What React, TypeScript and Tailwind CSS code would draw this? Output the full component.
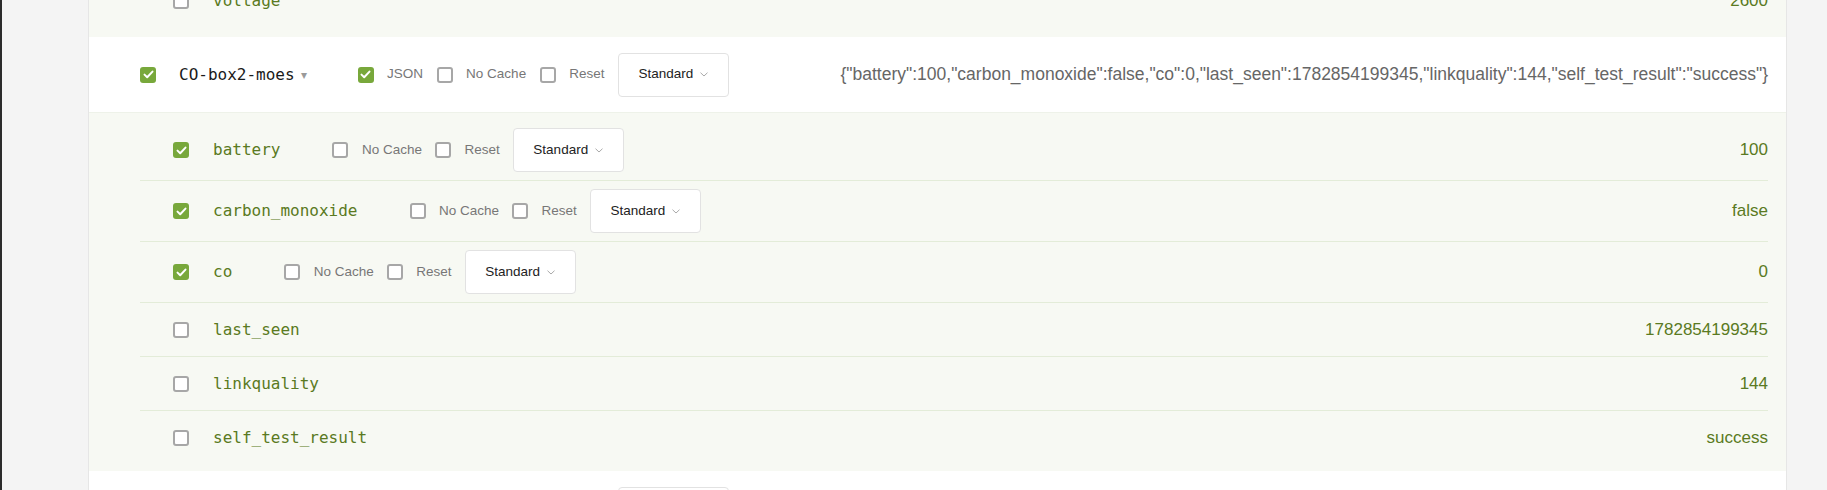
/**
 * Device state panel
 * A device row with its JSON payload and the nested property rows below it
 */

type Prop = {
  name: string
  value: string
  checked: boolean
}

const props: Prop[] = [
  { name: 'battery', value: '100', checked: true },
  { name: 'carbon_monoxide', value: 'false', checked: true },
  { name: 'co', value: '0', checked: true },
  { name: 'last_seen', value: '1782854199345', checked: false },
  { name: 'linkquality', value: '144', checked: false },
  { name: 'self_test_result', value: 'success', checked: false },
]

const payload =
  '{"battery":100,"carbon_monoxide":false,"co":0,"last_seen":1782854199345,"linkquality":144,"self_test_result":"success"}'

function Check({ on }: { on: boolean }) {
  if (on) {
    return (
      <span className="w-4 h-4 shrink-0 rounded-[3px] bg-[#78a83b] flex items-center justify-center">
        <svg width="11" height="9" viewBox="0 0 11 9" fill="none">
          <path d="M1.5 4.6L4.2 7.2L9.5 1.6" stroke="#fff" strokeWidth="2" strokeLinecap="round" strokeLinejoin="round" />
        </svg>
      </span>
    )
  }
  return <span className="w-4 h-4 shrink-0 rounded-[3px] border-2 border-[#a7a7a7] bg-white" />
}

function Option({ label, on = false }: { label: string; on?: boolean }) {
  return (
    <span className="flex items-center gap-[13.5px]">
      <Check on={on} />
      <span className="text-[13.5px] text-[#777]">{label}</span>
    </span>
  )
}

function ModeButton() {
  return (
    <button className="h-[44px] w-[111px] shrink-0 flex items-center justify-center gap-[7px] rounded-[4px] border border-[#e2e2e2] bg-white text-[13.5px] text-[#222]">
      Standard
      <svg width="8" height="5" viewBox="0 0 8 5" fill="none">
        <path d="M0.5 0.7L4 4L7.5 0.7" stroke="#a9a9a9" strokeWidth="1" />
      </svg>
    </button>
  )
}

function PropRow({ prop, last }: { prop: Prop; last: boolean }) {
  return (
    <div
      className={`flex items-center pl-[33px] ${prop.checked ? 'h-[61px]' : last ? 'h-[53px]' : 'h-[54px]'} ${
        last ? '' : 'border-b border-[#e3ecd8]'
      }`}
    >
      <Check on={prop.checked} />
      <span className="ml-6 mr-[52px] font-['DejaVu_Sans_Mono',monospace] text-[16px] text-[#5a7a22]">{prop.name}</span>
      {prop.checked && (
        <span className="flex items-center gap-[13px]">
          <Option label="No Cache" />
          <Option label="Reset" />
          <ModeButton />
        </span>
      )}
      <span className="ml-auto text-[17px] text-[#5a7a22]">{prop.value}</span>
    </div>
  )
}

export default function App() {
  return (
    <div className="flex h-[490px] overflow-hidden bg-[#f4f4f4] font-['Liberation_Sans',Arial,sans-serif]">
      <div className="w-[2px] shrink-0 bg-[#2b2b2b]" />
      <div className="w-[86px] shrink-0" />

      {/* Panel */}
      <div className="w-[1699px] shrink-0 bg-white border-l border-r border-[#e6e6e6]">
        {/* Tail of the previous device */}
        <div className="-mt-[26px] bg-[#f7f9f3] pl-[51px] pr-[18px] pb-[10px]">
          <PropRow prop={{ name: 'voltage', value: '2600', checked: false }} last />
        </div>

        {/* Device row */}
        <div className="h-[76px] flex items-center pl-[51px] pr-[18px] border-b border-[#eef2e9]">
          <Check on />
          <span className="ml-[23px] font-['DejaVu_Sans_Mono',monospace] text-[16px] text-[#1a1a1a]">CO-box2-moes</span>
          <span className="ml-[6px] text-[12px] text-[#9a9a9a]">▾</span>
          <span className="ml-[51px] flex items-center gap-[13.5px]">
            <Option label="JSON" on />
            <Option label="No Cache" />
            <Option label="Reset" />
            <ModeButton />
          </span>
          <span className="ml-auto text-[17.5px] text-[#666]">{payload}</span>
        </div>

        {/* Properties */}
        <div className="bg-[#f7f9f3] pl-[51px] pr-[18px] pt-[7px] pb-[7px]">
          {props.map((p, i) => (
            <PropRow key={p.name} prop={p} last={i === props.length - 1} />
          ))}
        </div>

        {/* Next device, mostly below the fold */}
        <div className="h-[75px] flex items-center pl-[51px] pr-[18px]">
          <span className="ml-[478px]">
            <ModeButton />
          </span>
        </div>
      </div>
    </div>
  )
}
